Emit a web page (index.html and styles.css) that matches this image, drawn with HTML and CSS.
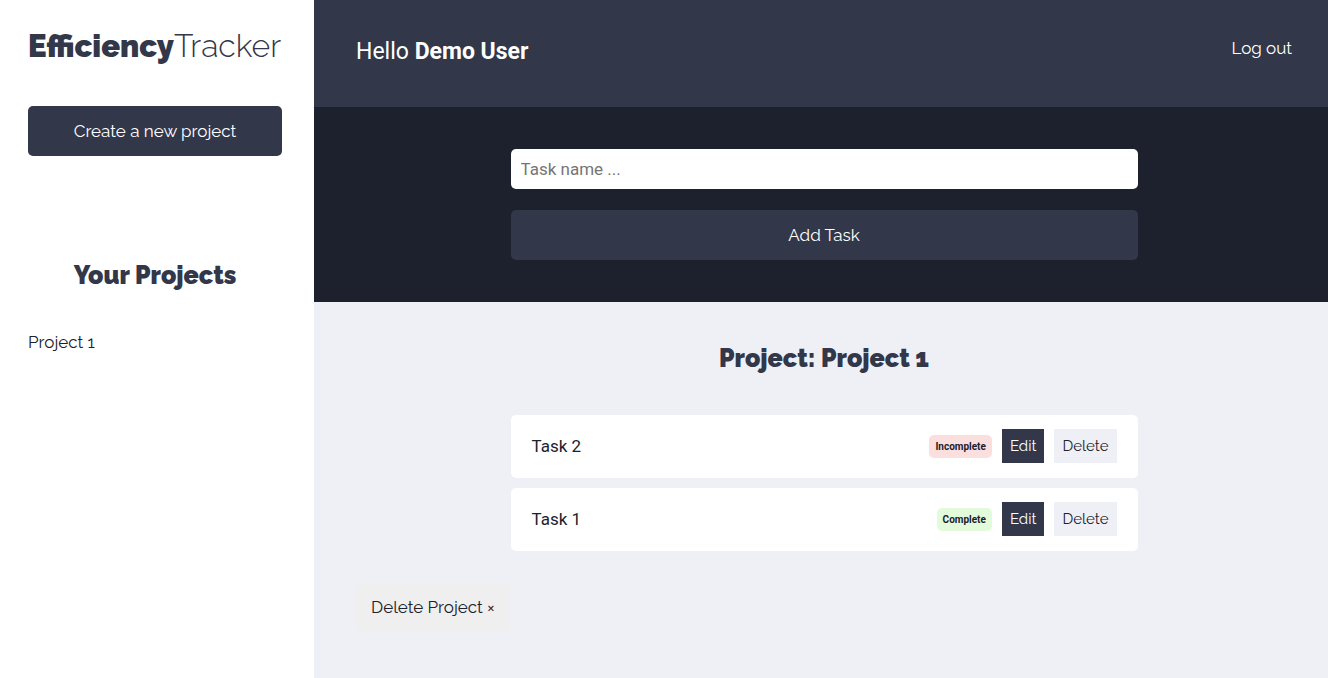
FILE: index.html
```html
<!DOCTYPE html>
<html lang="en">
<head>
<meta charset="utf-8">
<meta name="viewport" content="width=device-width, initial-scale=1">
<title>EfficiencyTracker</title>
<link rel="stylesheet" href="styles.css">
</head>
<body>
<div class="layout">
  <aside class="sidebar">
    <h1 class="logo"><strong>Efficiency</strong><span>Tracker</span></h1>
    <button class="button" type="button">Create a new project</button>
    <h2 class="sidebar-title">Your Projects</h2>
    <nav><a class="project-link" href="#project-1">Project 1</a></nav>
  </aside>
  <div class="content">
    <header class="topbar">
      <p class="greeting">Hello <strong>Demo User</strong></p>
      <a class="logout" href="#logout">Log out</a>
    </header>
    <form class="task-form">
      <input class="task-input" type="text" aria-label="Task name" placeholder="Task name ...">
      <button class="button" type="button">Add Task</button>
    </form>
    <main class="project" id="project-1">
      <h2 class="project-title">Project: Project 1</h2>
      <ul class="tasks">
        <li class="task">
          <span class="task-name">Task 2</span>
          <span class="badge badge-incomplete">Incomplete</span>
          <button class="action action-edit" type="button">Edit</button>
          <button class="action action-delete" type="button">Delete</button>
        </li>
        <li class="task">
          <span class="task-name">Task 1</span>
          <span class="badge badge-complete">Complete</span>
          <button class="action action-edit" type="button">Edit</button>
          <button class="action action-delete" type="button">Delete</button>
        </li>
      </ul>
      <button class="delete-project" type="button">Delete Project ×</button>
    </main>
  </div>
</div>
</body>
</html>
```
FILE: styles.css
```css
:root {
  --navy: #32374a;
  --dark: #1c212d;
  --pale: #eef0f6;
  --display: Raleway, Lato, "Open Sans", sans-serif;
  --body: Roboto, sans-serif;
}

* { box-sizing: border-box; }

body {
  margin: 0;
  font-family: var(--body);
  font-size: 17px;
  color: var(--dark);
}

h1, h2, p, ul { margin: 0; padding: 0; }

button { border: 0; cursor: pointer; font-family: var(--display); }

a { text-decoration: none; }

.layout { display: flex; min-height: 100vh; }

.sidebar {
  flex: 0 0 314px;
  padding: 24px 32px 24px 28px;
  background: #fff;
}

.logo {
  margin-bottom: 38px;
  font: 300 32px/44px var(--display);
  color: var(--navy);
  white-space: nowrap;
}

.logo strong { font-size: 31px; font-weight: 900; }

.button {
  display: block;
  width: 100%;
  height: 50px;
  border-radius: 5px;
  background: var(--navy);
  color: #fff;
  font-size: 17px;
}

.sidebar-title {
  margin: 101px 0 37px;
  font: 900 25px/36px var(--display);
  color: var(--navy);
  text-align: center;
}

.project-link {
  font: 400 17px/24px var(--display);
  color: var(--dark);
}

.content {
  flex: 1;
  display: flex;
  flex-direction: column;
  min-width: 0;
}

.topbar {
  display: flex;
  justify-content: space-between;
  padding: 36px 36px 39px 42px;
  background: var(--navy);
  color: #fff;
}

.greeting { font-size: 23px; line-height: 32px; }

.logout {
  font: 400 17px/24px var(--display);
  color: #fff;
}

.task-form {
  display: grid;
  grid-template-columns: minmax(0, 627px);
  justify-content: center;
  gap: 21px;
  padding: 42px 36px 42px 42px;
  background: var(--dark);
}

.task-input {
  width: 100%;
  height: 40px;
  padding: 0 10px;
  border: 0;
  border-radius: 5px;
  background: #fff;
  font: 17px var(--body);
}

.task-input::placeholder { color: #757575; }

.project {
  flex: 1;
  padding: 38px 36px 42px 42px;
  background: var(--pale);
}

.project-title {
  margin-bottom: 39px;
  font: 900 25px/36px var(--display);
  color: var(--navy);
  text-align: center;
}

.tasks {
  display: grid;
  gap: 10px;
  max-width: 627px;
  margin: 0 auto 32px;
  list-style: none;
}

.task {
  display: flex;
  align-items: center;
  gap: 10px;
  padding: 14px 21px 15px;
  border-radius: 5px;
  background: #fff;
}

.task-name { flex: 1; }

.badge {
  padding: 5px 6px;
  border-radius: 5px;
  font-size: 10px;
  font-weight: 700;
  line-height: 13px;
}

.badge-incomplete { background: #fbdede; }
.badge-complete { background: #e2fcdb; }

.action { height: 34px; padding: 0 8px; font-size: 15px; }
.action-edit { background: var(--navy); color: #fff; }
.action-delete { background: var(--pale); color: var(--dark); }

.delete-project {
  height: 48px;
  padding: 0 15px;
  border-radius: 5px;
  background: #efefef;
  color: var(--dark);
  font-size: 17px;
}
```
